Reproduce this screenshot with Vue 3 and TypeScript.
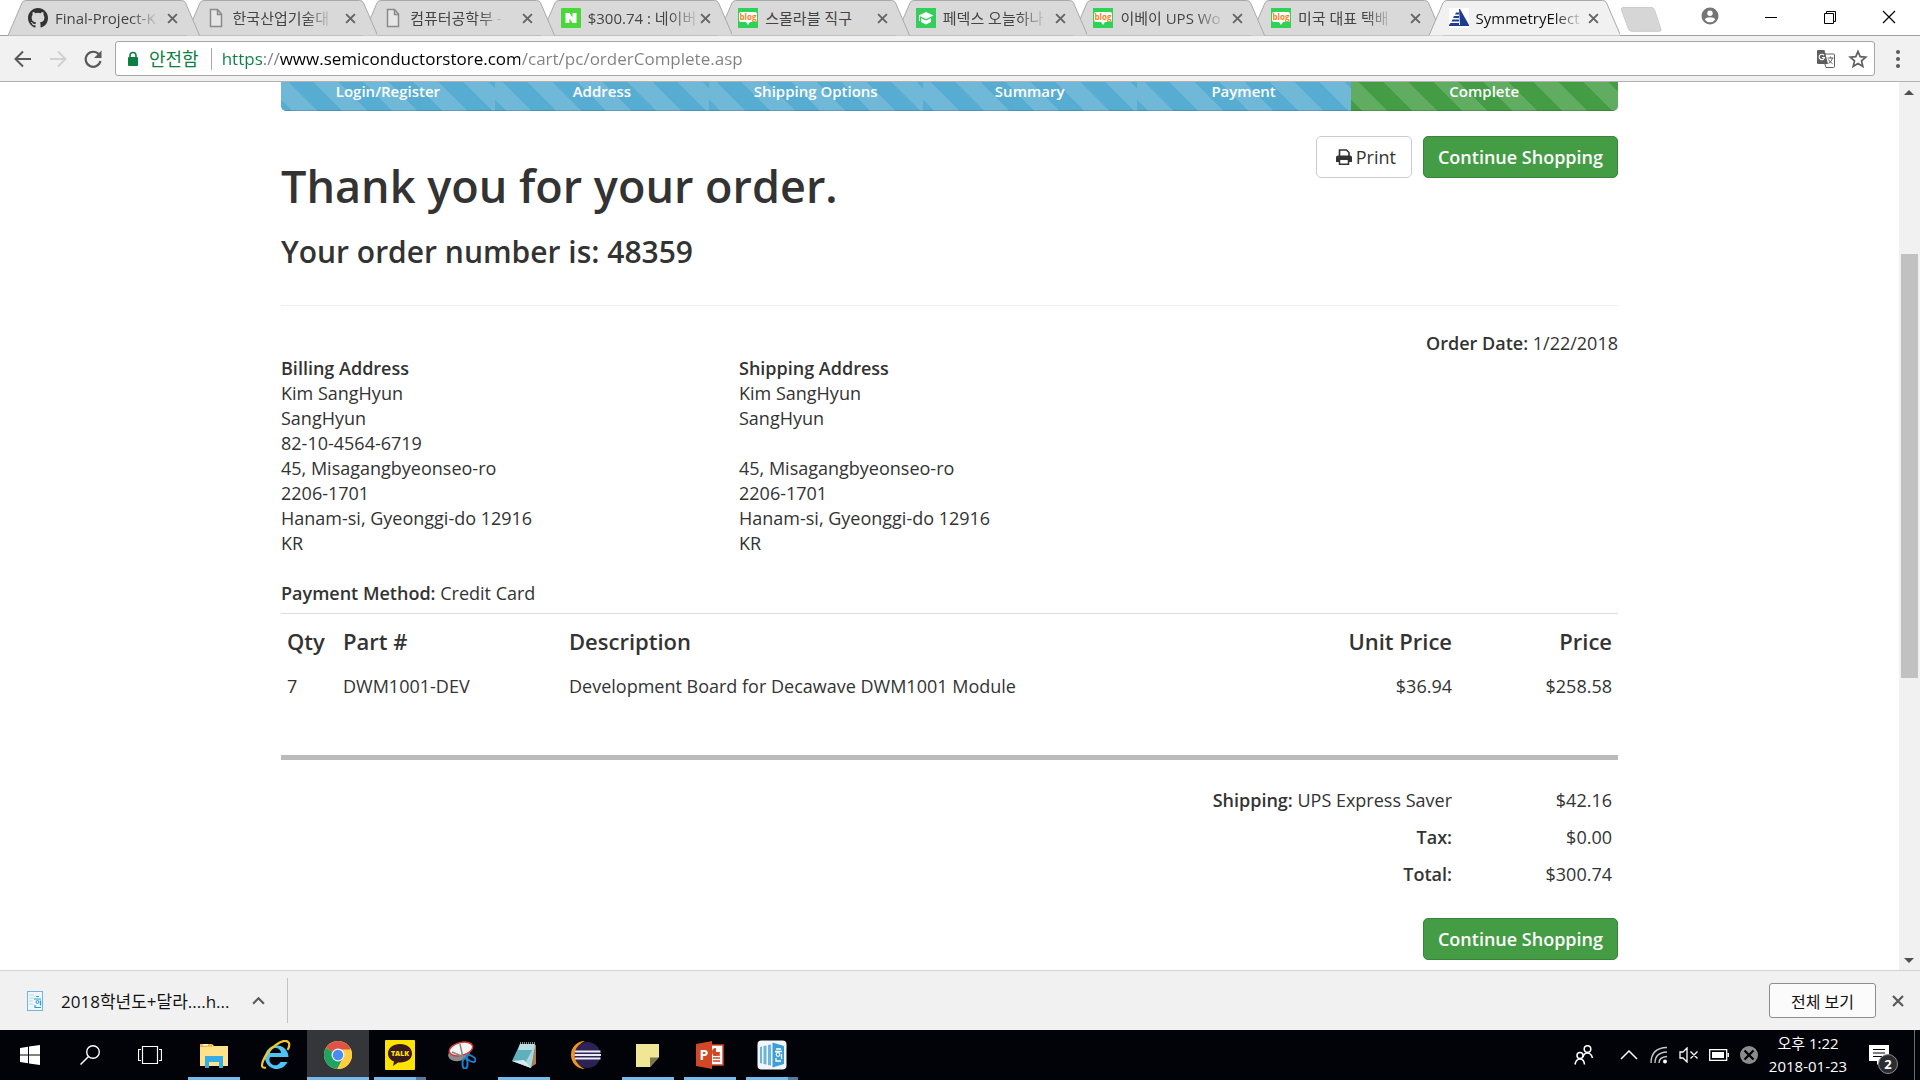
<script setup lang="ts">
interface Tab {
  title: string
  icon: 'github' | 'file' | 'naver' | 'blog' | 'cap' | 'sym'
  faded: boolean
}

const tabs: Tab[] = [
  { title: 'Final-Project-K', icon: 'github', faded: true },
  { title: '한국산업기술대', icon: 'file', faded: true },
  { title: '컴퓨터공학부 -', icon: 'file', faded: true },
  { title: '$300.74 : 네이버', icon: 'naver', faded: true },
  { title: '스몰라블 직구', icon: 'blog', faded: false },
  { title: '페덱스 오늘하나', icon: 'cap', faded: true },
  { title: '이베이 UPS Wo', icon: 'blog', faded: true },
  { title: '미국 대표 택배', icon: 'blog', faded: true },
  { title: 'SymmetryElect', icon: 'sym', faded: true },
]
const activeTab = tabs.length - 1

const steps = ['Login/Register', 'Address', 'Shipping Options', 'Summary', 'Payment', 'Complete']

const billing = ['Kim SangHyun', 'SangHyun', '82-10-4564-6719', '45, Misagangbyeonseo-ro', '2206-1701', 'Hanam-si, Gyeonggi-do 12916', 'KR']
const shipping = ['Kim SangHyun', 'SangHyun', '', '45, Misagangbyeonseo-ro', '2206-1701', 'Hanam-si, Gyeonggi-do 12916', 'KR']

const items = [
  { qty: 7, part: 'DWM1001-DEV', description: 'Development Board for Decawave DWM1001 Module', unit: '$36.94', price: '$258.58' },
]
const totals = [
  { label: 'Shipping:', note: 'UPS Express Saver', amount: '$42.16' },
  { label: 'Tax:', note: '', amount: '$0.00' },
  { label: 'Total:', note: '', amount: '$300.74' },
]
const url = 'https://www.semiconductorstore.com/cart/pc/orderComplete.asp'
</script>

<template>
  <div class="screen">
    <header class="tabstrip">
      <div class="tabs" role="tablist">
        <div
          v-for="(tab, i) in tabs"
          :key="i"
          class="tab"
          :class="{ active: i === activeTab }"
          :style="{ zIndex: i === activeTab ? 20 : 10 - i }"
          role="tab"
        >
          <svg class="shape" viewBox="0 0 192 36" preserveAspectRatio="none" aria-hidden="true">
            <path d="M0 35.5 L14 3 Q15 .5 18 .5 H174 Q177 .5 178 3 L192 35.5" />
          </svg>
          <svg v-if="tab.icon === 'github'" class="fav" viewBox="0 0 16 16">
            <path fill="#333" d="M8 0C3.58 0 0 3.58 0 8c0 3.54 2.29 6.53 5.47 7.59.4.07.55-.17.55-.38 0-.19-.01-.82-.01-1.49-2.01.37-2.53-.49-2.69-.94-.09-.23-.48-.94-.82-1.13-.28-.15-.68-.52-.01-.53.63-.01 1.08.58 1.23.82.72 1.21 1.87.87 2.33.66.07-.52.28-.87.51-1.07-1.78-.2-3.64-.89-3.64-3.95 0-.87.31-1.59.82-2.15-.08-.2-.36-1.02.08-2.12 0 0 .67-.21 2.2.82a7.6 7.6 0 0 1 4 0c1.53-1.04 2.2-.82 2.2-.82.44 1.1.16 1.92.08 2.12.51.56.82 1.27.82 2.15 0 3.07-1.87 3.75-3.65 3.95.29.25.54.73.54 1.48 0 1.07-.01 1.93-.01 2.2 0 .21.15.46.55.38A8 8 0 0 0 16 8c0-4.42-3.58-8-8-8z" />
          </svg>
          <svg v-else-if="tab.icon === 'file'" class="fav" viewBox="0 0 20 20">
            <path d="M4.500 1.500h7l4 4.500v12.500h-11zM11.500 1.500v5h4" fill="#e6e6e6" stroke="#8a8a8a" stroke-width="1.500" />
          </svg>
          <svg v-else-if="tab.icon === 'naver'" class="fav" viewBox="0 0 20 20">
            <rect width="20" height="20" rx="1" fill="#4bd63a" />
            <path d="M4.500 5h4l3 4.500V5h4v10h-4l-3-4.500V15h-4z" fill="#fff" />
          </svg>
          <svg v-else-if="tab.icon === 'blog'" class="fav" viewBox="0 0 20 20">
            <rect width="20" height="20" fill="#2fd257" />
            <path d="M3 4h14q2 0 2 2v6q0 2-2 2h-5l-2 3-2-3H3q-2 0-2-2V6q0-2 2-2z" fill="#fff" />
            <text x="10" y="12" text-anchor="middle" font-size="8" font-weight="700" fill="#f58220">blog</text>
          </svg>
          <svg v-else-if="tab.icon === 'cap'" class="fav" viewBox="0 0 20 20">
            <rect width="20" height="20" fill="#33cf5b" />
            <path d="M2.500 7.500 10 4l7.500 3.500L10 11zM5 10l5 2.500L15 10v4l-5 2.500L5 14zM3 8h1v5H3z" fill="#fff" />
          </svg>
          <svg v-else class="fav" viewBox="0 0 20 20">
            <rect width="20" height="20" fill="#fff" />
            <path d="M10 1h1l9 16h-9zM7 4.500h3v2H6zM5 8h5v2H4zM3.500 11.500H10v2H2.500zM1.500 15H10v2H0zM0 17h20v1H0z" fill="#1e3c90" />
          </svg>
          <span class="title" :class="{ faded: tab.faded }">{{ tab.title }}</span>
          <button class="tab-close" aria-label="Close tab">
            <svg viewBox="0 0 10 10"><path d="M1 1l8 8M9 1L1 9" stroke="#666" stroke-width="1.800" /></svg>
          </button>
        </div>
      </div>
      <button class="newtab" aria-label="New tab">
        <svg viewBox="0 0 44 26"><path d="M3 .5h30q2 0 3 2l7 21q.5 2-2 2H13q-3 0-4-2L1.500 3Q1 .5 3 .5z" fill="#d6d6d6" stroke="#cacaca" /></svg>
      </button>
      <div class="window-controls">
        <button class="profile" aria-label="Profile">
          <svg viewBox="0 0 18 18"><circle cx="9" cy="9" r="8.500" fill="#757575" /><circle cx="9" cy="6.200" r="2.700" fill="#fff" /><path d="M3.800 12.600Q5 10.300 9 10.300t5.200 2.300Q12.500 15.300 9 15.300t-5.200-2.700z" fill="#fff" /></svg>
        </button>
        <button aria-label="Minimize"><svg viewBox="0 0 14 14"><path d="M1 7.500h12" stroke="#000" /></svg></button>
        <button aria-label="Restore"><svg viewBox="0 0 14 14"><path d="M1.500 3.500h9v10h-9zM3.500 3.500v-2h9v10h-2" fill="none" stroke="#000" /></svg></button>
        <button aria-label="Close"><svg viewBox="0 0 14 14"><path d="M1 1l12 12M13 1L1 13" stroke="#000" stroke-width="1.200" /></svg></button>
      </div>
    </header>

    <nav class="toolbar">
      <button aria-label="Back"><svg viewBox="0 0 20 20"><path d="M18 10H3M10 2.500L2.500 10l7.500 7.500" fill="none" stroke="#5a5a5a" stroke-width="2" /></svg></button>
      <button aria-label="Forward"><svg viewBox="0 0 20 20"><path d="M2 10h15M10 2.500l7.500 7.500-7.500 7.500" fill="none" stroke="#d0d0d0" stroke-width="2" /></svg></button>
      <button aria-label="Reload"><svg viewBox="0 0 20 20"><path d="M16 5.500A7.500 7.500 0 1 0 17.500 12" fill="none" stroke="#5a5a5a" stroke-width="2.200" /><path d="M18.500 1.500v7.500H11z" fill="#5a5a5a" /></svg></button>
      <div class="omnibox">
        <svg class="lock" viewBox="0 0 12 16"><path d="M3 7V4.500a3 3 0 0 1 6 0V7" fill="none" stroke="#0b8043" stroke-width="1.600" /><rect x="1" y="6" width="10" height="9" rx="1" fill="#0b8043" /></svg>
        <label class="secure" for="address">안전함</label>
        <input id="address" class="address" type="text" :value="url" />
        <svg class="tool" viewBox="0 0 20 20">
          <path d="M9 5h8.500q1 0 1 1v11.500q0 1-1 1H10L8.500 14" fill="#fff" stroke="#5f5f5f" />
          <path d="M2 1h6.500l3.500 14H2q-1 0-1-1V2q0-1 1-1z" fill="#5f5f5f" />
          <path d="M8 6.300A2.700 2.700 0 1 0 8.500 8.500H6" fill="none" stroke="#fff" stroke-width="1.200" />
          <path d="M11.500 9h6M14.500 7.500V9M16.500 9q-1 4-4 5.500M12.500 10.500q1.500 3 4 4" fill="none" stroke="#5f5f5f" />
        </svg>
        <svg class="tool" viewBox="0 0 20 20"><path d="M10 2.500l2.200 5.200 5.600.5-4.300 3.700 1.300 5.500-4.800-2.900-4.800 2.900 1.300-5.500L2.200 8.200l5.600-.5z" fill="none" stroke="#5f5f5f" stroke-width="1.700" /></svg>
      </div>
      <button class="menu" aria-label="Menu"><svg viewBox="0 0 20 20"><circle cx="10" cy="3" r="2" /><circle cx="10" cy="10" r="2" /><circle cx="10" cy="17" r="2" /></svg></button>
    </nav>

    <div class="viewport">
      <main class="page">
        <ol class="steps">
          <li v-for="(step, i) in steps" :key="step" :class="{ done: i === steps.length - 1 }">{{ step }}</li>
        </ol>

        <div class="head">
          <div>
            <h1>Thank you for your order.</h1>
            <h2>Your order number is: 48359</h2>
          </div>
          <div class="actions">
            <button class="btn">
              <svg viewBox="0 0 18 18"><path d="M4.500 8V2h7L14 4.500V8" fill="none" stroke="#333" stroke-width="1.600" /><path d="M3 7.500h12q2 0 2 2V14h-3v-2H4v2H1V9.500q0-2 2-2z" fill="#333" /><path d="M4.500 12v4.200h9V12" fill="#fff" stroke="#333" stroke-width="1.500" /></svg>Print
            </button>
            <a class="btn primary" href="#">Continue Shopping</a>
          </div>
        </div>

        <p class="date"><b>Order Date:</b> 1/22/2018</p>

        <div class="addresses">
          <section>
            <b>Billing Address</b>
            <div v-for="(line, i) in billing" :key="i" class="line">{{ line }}</div>
          </section>
          <section>
            <b>Shipping Address</b>
            <div v-for="(line, i) in shipping" :key="i" class="line">{{ line }}</div>
          </section>
        </div>

        <p class="payment"><b>Payment Method:</b> Credit Card</p>

        <table class="items">
          <thead>
            <tr><th class="qty">Qty</th><th class="part">Part #</th><th>Description</th><th class="num">Unit Price</th><th class="num price">Price</th></tr>
          </thead>
          <tbody>
            <tr v-for="item in items" :key="item.part">
              <td>{{ item.qty }}</td><td>{{ item.part }}</td><td>{{ item.description }}</td><td class="num">{{ item.unit }}</td><td class="num">{{ item.price }}</td>
            </tr>
          </tbody>
        </table>

        <table class="totals">
          <tbody>
            <tr v-for="row in totals" :key="row.label">
              <th class="num">{{ row.label }}<span v-if="row.note">{{ ' ' + row.note }}</span></th><td class="num price">{{ row.amount }}</td>
            </tr>
          </tbody>
        </table>

        <div class="foot"><a class="btn primary" href="#">Continue Shopping</a></div>
      </main>
      <div class="scrollbar">
        <svg viewBox="0 0 20 20"><path d="M10 8l5 5H5z" fill="#505050" /></svg>
        <div class="track"><div class="thumb"></div></div>
        <svg viewBox="0 0 20 20"><path d="M10 13L5 8h10z" fill="#505050" /></svg>
      </div>
    </div>

    <div class="downloads">
      <button class="file">
        <svg viewBox="0 0 16 20"><rect x=".5" y=".5" width="15" height="19" fill="#eef7fc" stroke="#6fb6dc" /><path d="M2 4h5M2 7h5M2 10h4M2 13h4" stroke="#b9dcef" /><path d="M9 5.500h3M7 8h7M13.500 9.500v5M8 14v2.500h6" fill="none" stroke="#2b9ad6" stroke-width="1.200" /><circle cx="10.500" cy="11" r="1.500" fill="none" stroke="#2b9ad6" /></svg>
        <span>2018학년도+달라....h...</span>
      </button>
      <button class="more" aria-label="More"><svg viewBox="0 0 12 12"><path d="M1 9l5-5 5 5" fill="none" stroke="#5a5a5a" stroke-width="2" /></svg></button>
      <div class="divider"></div>
      <button class="show-all">전체 보기</button>
      <button class="dismiss" aria-label="Close"><svg viewBox="0 0 12 12"><path d="M1 1l10 10M11 1L1 11" stroke="#5a5a5a" stroke-width="2.200" /></svg></button>
    </div>

    <footer class="taskbar">
      <button class="sys" aria-label="Start"><svg width="20" height="20" viewBox="0 0 20 20"><path d="M0 3l8-1.200v7.700H0zM9 1.600L20 0v9.500H9zM0 10.500h8v7.700L0 17zM9 10.500h11V20L9 18.400z" fill="#fff" /></svg></button>
      <button class="sys" aria-label="Search"><svg width="20" height="20" viewBox="0 0 20 20"><circle cx="13" cy="7" r="6.300" fill="none" stroke="#fff" stroke-width="1.400" /><path d="M8.500 11.500L.5 19.500" stroke="#fff" stroke-width="1.500" /></svg></button>
      <button class="sys" aria-label="Task view"><svg width="24" height="20" viewBox="0 0 24 20"><path d="M4.500 1.500h15v17h-15zM3 4.500H.5v11H3M21 4.500h2.500v11H21" fill="none" stroke="#fff" stroke-width="1.200" /></svg></button>
      <div class="apps">
        <button class="app open" aria-label="File Explorer">
          <svg width="28" height="26" viewBox="0 0 28 26"><path d="M0 2h12l2 2h14v20H0z" fill="#ffe28a" /><path d="M0 2h12v3H0z" fill="#f2bb3c" /><path d="M3 2h5v1.500H3z" fill="#fff" /><path d="M5 26V14h18v12h-4v-6h-10v6z" fill="#33ade4" /></svg>
        </button>
        <button class="app" aria-label="Internet Explorer">
          <svg width="30" height="30" viewBox="0 0 30 30"><path d="M9 17h18.500a11.800 11.800 0 1 0-1 5h-7a5 5 0 0 1-10.500-5zm0-4a5.500 5 0 0 1 11 0z" fill="#4ec3f4" fill-rule="evenodd" /><path d="M5 27.500Q-1 29 2 21 6 11 15.500 4.500T28 3q1 3-1.500 7" fill="none" stroke="#f6c428" stroke-width="2.200" /></svg>
        </button>
        <button class="app open current" aria-label="Chrome">
          <svg width="28" height="28" viewBox="0 0 28 28"><circle cx="14" cy="14" r="14" fill="#ffcd42" /><path d="M14 14L1.900 7A14 14 0 0 1 26.100 7z" fill="#de5347" /><path d="M14 14L1.900 7A14 14 0 0 0 13 28l6.500-11z" fill="#1da362" /><path d="M14 14h6l-6.500 14A14 14 0 0 0 26.100 7H14z" fill="#ffcd42" /><path d="M14 7h12.100v1.500H14z" fill="#de5347" /><circle cx="14" cy="14" r="6.500" fill="#f1f1f1" /><circle cx="14" cy="14" r="5.200" fill="#4a8af4" /></svg>
        </button>
        <button class="app open stacked" aria-label="KakaoTalk">
          <svg width="30" height="30" viewBox="0 0 30 30"><rect width="30" height="30" rx="1" fill="#ffe300" /><path d="M15 4c-7 0-12 4-12 9.500 0 4 2.500 6.500 6 8L8 26l5-3.500h2c7 0 12-3.500 12-9S22 4 15 4z" fill="#391b1b" /><text x="15" y="16" text-anchor="middle" font-size="7" font-weight="800" fill="#ffe300">TALK</text></svg>
        </button>
        <button class="app" aria-label="Snipping Tool">
          <svg width="28" height="28" viewBox="0 0 28 28"><ellipse cx="11" cy="13" rx="11" ry="7" fill="#8c8c8c" transform="rotate(-12 11 13)" /><ellipse cx="13" cy="8" rx="12" ry="6.500" fill="#f4f4f4" stroke="#d33a3a" stroke-width="1.500" transform="rotate(-14 13 8)" /><path d="M12 3l3 14M4 11l12 5" stroke="#888" stroke-width="1.500" /><ellipse cx="17" cy="22.500" rx="2.500" ry="5" fill="none" stroke="#1c7fd0" stroke-width="2" /><ellipse cx="23" cy="17.500" rx="5" ry="2.600" fill="none" stroke="#1c7fd0" stroke-width="2" transform="rotate(30 23 17.500)" /></svg>
        </button>
        <button class="app open" aria-label="Notepad">
          <svg width="28" height="28" viewBox="0 0 28 28"><path d="M22 3l4 1v19l-5 3z" fill="#a9824b" /><path d="M10 3L25 4 21 27 2 20z" fill="#5fb0bd" /><path d="M10 3h15l-1 6H8z" fill="#b9dde2" /><path d="M25 4L21 27l-7-3z" fill="#a9d6dc" /><path d="M2 20l12-1 7 8z" fill="#d8ecee" /><path d="M10 2h15" stroke="#888" stroke-width="2" stroke-dasharray="1 1" /></svg>
        </button>
        <button class="app" aria-label="Eclipse">
          <svg width="30" height="28" viewBox="0 0 30 28"><path d="M14 0A14 14 0 0 0 14 28 15 15 0 0 1 14 0z" fill="#f7941e" /><circle cx="16.500" cy="14" r="13" fill="#2c2255" /><path d="M4 10.500h25.500M3.500 14H30M4 17.500h25.500" stroke="#eceaf5" stroke-width="2" /></svg>
        </button>
        <button class="app open" aria-label="Sticky Notes">
          <svg width="24" height="24" viewBox="0 0 24 24"><path d="M0 1h23v13l-9 10H0z" fill="#f0e696" /><path d="M14 14.500h9L14 24z" fill="#7c7850" /></svg>
        </button>
        <button class="app open" aria-label="PowerPoint">
          <svg width="28" height="28" viewBox="0 0 28 28"><path d="M13 4h14v20H13z" fill="#fff" stroke="#d24726" stroke-width="1.500" /><path d="M17 14h7M17 17h7M17 20h7" stroke="#d24726" stroke-width="1.500" /><path d="M20 7v4h4a4 4 0 1 1-4-4z" fill="#d24726" /><path d="M0 3l16-3v28L0 25z" fill="#d24726" /><text x="8" y="19" text-anchor="middle" font-size="14" font-weight="700" fill="#fff">P</text></svg>
        </button>
        <button class="app open stacked" aria-label="Hancom">
          <svg width="30" height="30" viewBox="0 0 30 30"><rect width="29" height="29" x=".5" y=".5" rx="4" fill="#f3f6f9" /><path d="M3 7l2-.5v17L3 23zM6.500 6l3-.5v19l-3-.5zM11 5l3-.5v21l-3-.5z" fill="#6bb5de" /><path d="M15.500 2.500L27 6v18l-11.500 3.500z" fill="#3d9fd6" /><path d="M19 9h5M18 11.500h7M24.500 14v5M19 18v3h5" fill="none" stroke="#fff" stroke-width="1.300" /><circle cx="21" cy="14.500" r="1.800" fill="none" stroke="#fff" stroke-width="1.200" /></svg>
        </button>
      </div>
      <div class="tray">
        <button class="people" aria-label="People"><svg width="20" height="20" viewBox="0 0 20 20"><g fill="none" stroke="#fff" stroke-width="1.500"><circle cx="13.500" cy="4" r="3.300" /><path d="M9 12q1-4 4.500-4t5 5" /><circle cx="6" cy="10.500" r="3" /><path d="M1 19.500q1-5.500 5-5.500t4.500 5.500" /></g></svg></button>
        <button aria-label="Hidden icons"><svg width="18" height="10" viewBox="0 0 18 10"><path d="M1 9l8-8 8 8" fill="none" stroke="#fff" stroke-width="1.500" /></svg></button>
        <button aria-label="Network"><svg width="18" height="18" viewBox="0 0 18 18"><g fill="none" stroke="#c9c9c9" stroke-width="1.400"><path d="M1 17Q1 2 17 1.500" /><path d="M5 17Q5 6.500 17 6" /><path d="M9 17q0-6 8-6.500" /></g><circle cx="15" cy="15.500" r="2" fill="#fff" /></svg></button>
        <button aria-label="Volume"><svg width="20" height="16" viewBox="0 0 20 16"><path d="M1 5h3l4-4v14l-4-4H1zM11.500 4.500l7 7M18.500 4.500l-7 7" fill="none" stroke="#fff" stroke-width="1.300" /></svg></button>
        <button aria-label="Battery"><svg width="20" height="12" viewBox="0 0 20 12"><path d="M.7.7h17v10.600H.7zM19.300 4v4" fill="none" stroke="#fff" stroke-width="1.300" /><path d="M3 3h12v6H3z" fill="#fff" /></svg></button>
        <button aria-label="Status"><svg width="18" height="18" viewBox="0 0 18 18"><circle cx="9" cy="9" r="9" fill="#8c8c8c" /><path d="M4.500 4.500l9 9M13.500 4.500l-9 9" stroke="#000" stroke-width="2.200" /></svg></button>
        <div class="clock"><span>오후 1:22</span><span>2018-01-23</span></div>
        <button class="notices" aria-label="Notifications">
          <svg width="20" height="20" viewBox="0 0 20 20"><path d="M0 0h20v16h-8l-4 4v-4H0z" fill="#fff" /><path d="M4 4.500h12M4 8h12M4 11.500h12" stroke="#000" stroke-width="1.200" /></svg>
          <span class="badge">2</span>
        </button>
        <div class="peek"></div>
      </div>
    </footer>
  </div>
</template>

<style>
body {
  margin: 0;
  overflow: hidden;
}
</style>

<style scoped>
.screen {
  display: flex;
  flex-direction: column;
  height: 100vh;
  background: #fff;
  color: #333;
  font-family: "Open Sans", "Noto Sans CJK KR", sans-serif;
}
.screen * {
  box-sizing: border-box;
}
button {
  display: flex;
  align-items: center;
  justify-content: center;
  padding: 0;
  border: 0;
  background: none;
  color: inherit;
  font: inherit;
}
svg {
  display: block;
  flex: none;
}

/* Tab strip */
.tabstrip {
  position: relative;
  z-index: 1;
  display: flex;
  height: 36px;
  padding-left: 8px;
  box-shadow: inset 0 -1px #a2a2a2;
}
.tabs {
  display: flex;
  flex: 0 1 1612px;
  min-width: 0;
}
.tab {
  position: relative;
  display: flex;
  flex: 1 1 0;
  align-items: center;
  min-width: 0;
  height: 36px;
  padding: 0 21px 0 20px;
  font-size: 15px;
  line-height: 24px;
  color: #444;
}
.tab + .tab {
  margin-left: -14px;
}
.tab .shape {
  position: absolute;
  inset: 0;
  width: 100%;
  height: 100%;
  fill: #d9d9d9;
  stroke: #a9a9a9;
}
.tab.active .shape {
  fill: #f1f1f1;
}
.tab.active {
  color: #111;
}
.fav {
  position: relative;
  width: 20px;
  height: 20px;
}
.title {
  position: relative;
  margin: 0 auto 0 7px;
  white-space: nowrap;
}
.faded {
  -webkit-mask-image: linear-gradient(90deg, #000 75%, rgba(0, 0, 0, .15));
  mask-image: linear-gradient(90deg, #000 75%, rgba(0, 0, 0, .15));
}
.tab-close {
  position: relative;
  width: 12px;
}
.tab-close svg {
  width: 11px;
}
.newtab {
  width: 42px;
  height: 39px;
}
.newtab svg {
  width: 42px;
}
.window-controls {
  display: flex;
  margin-left: auto;
  padding-right: 2px;
  height: 33px;
}
.window-controls button {
  width: 59px;
}
.window-controls svg {
  width: 14px;
}
.window-controls .profile {
  height: 31px;
  margin-right: 2px;
}
.window-controls .profile svg {
  width: 18px;
}

/* Toolbar */
.toolbar {
  display: flex;
  align-items: center;
  height: 46px;
  padding: 0 6px 0 5px;
  background: #f1f1f1;
  border-bottom: 1px solid #b0b0b0;
}
.toolbar button {
  width: 35px;
}
.toolbar button svg {
  width: 20px;
}
.toolbar button.menu {
  width: 32px;
  margin-left: 7px;
  fill: #5a5a5a;
}
.omnibox {
  display: flex;
  flex: 1;
  align-items: center;
  gap: 12px;
  height: 35px;
  margin-left: 5px;
  padding: 0 6px 0 11px;
  background: #fff;
  border: 1px solid #a6a6a6;
  border-radius: 3px;
}
.lock {
  width: 12px;
}
.secure {
  margin-left: -2px;
  padding-right: 12px;
  border-right: 1px solid #a8a8a8;
  color: #0b8043;
  font-size: 18px;
  line-height: 22px;
}
.address {
  flex: 1;
  min-width: 0;
  margin-left: -2px;
  padding: 0;
  border: 0;
  outline: 0;
  font: 17px/28px "Open Sans", sans-serif;
  color: transparent;
  background: linear-gradient(90deg, #0b8043 42px, #808080 42px 57px, #000 57px 298px, #808080 298px);
  -webkit-background-clip: text;
  background-clip: text;
}
.tool {
  width: 20px;
}

/* Viewport */
.viewport {
  display: flex;
  flex: 1;
  min-height: 0;
  overflow: hidden;
}
.page {
  width: 1337px;
  max-width: 90%;
  margin: 0 auto;
  font-size: 18px;
  line-height: 25px;
}
.scrollbar {
  display: flex;
  flex-direction: column;
  width: 21px;
  background: #f1f1f1;
}
.scrollbar svg {
  width: 20px;
}
.track {
  flex: 1;
}
.thumb {
  height: 50%;
  margin: 152px 2px 0;
  background: #c1c1c1;
}
.steps {
  display: flex;
  height: 62px;
  margin: -33px 0 25px;
  padding: 0;
  list-style: none;
  overflow: hidden;
  border-radius: 5px;
}
.steps li {
  width: 16%;
  padding-top: 30px;
  text-align: center;
  font-size: 15px;
  font-weight: 600;
  color: #fff;
  background: linear-gradient(45deg, rgba(255, 255, 255, .15) 25%, transparent 25%, transparent 50%, rgba(255, 255, 255, .15) 50%, rgba(255, 255, 255, .15) 75%, transparent 75%) 0 0 / 50px 50px #57acd1;
  box-shadow: inset 0 -1px rgba(0, 0, 0, .15);
}
.steps li.done {
  width: 20%;
  background-color: #449d44;
}
.head {
  display: flex;
  justify-content: space-between;
  padding-bottom: 37px;
  border-bottom: 1px solid #eee;
}
h1 {
  margin: 25px 0 24px;
  font-size: 45px;
  line-height: 50px;
  font-weight: 600;
}
h2 {
  margin: 0;
  font-size: 30px;
  line-height: 33px;
  font-weight: 600;
}
.actions {
  display: flex;
  align-items: flex-start;
  gap: 11px;
}
.btn {
  display: flex;
  align-items: center;
  height: 42px;
  padding: 0 15px;
  border: 1px solid #ccc;
  border-radius: 5px;
  font-size: 18px;
  line-height: 24px;
  text-decoration: none;
}
.btn svg {
  width: 18px;
  margin: 0 3px;
}
.btn.primary {
  padding: 0 14px;
  color: #fff;
  background: #449d44;
  border-color: #398439;
  font-weight: 600;
}
b,
th {
  font-weight: 600;
}
p {
  margin: 0;
}
.date {
  margin-top: 25px;
  text-align: right;
}
.addresses {
  display: flex;
}
.addresses section {
  width: 458px;
}
.line {
  min-height: 25px;
}
.payment {
  margin-top: 25px;
}
table {
  width: 100%;
  border-collapse: collapse;
  text-align: left;
}
th,
td {
  padding: 6px;
}
.items {
  margin: 7px 0 50px;
  border-top: 1px solid #ddd;
}
.items th {
  padding: 12px 6px;
  font-size: 22px;
  line-height: 30px;
}
.items .qty {
  width: 56px;
}
.items .part {
  width: 226px;
}
.num {
  text-align: right;
}
.price {
  width: 160px;
}
.totals {
  margin-bottom: 25px;
}
.totals span {
  font-weight: 400;
}
.totals::before {
  content: "";
  display: table-caption;
  height: 22px;
  border-top: 5px solid #bbb;
}
.foot {
  display: flex;
  justify-content: flex-end;
}

/* Downloads bar */
.downloads {
  display: flex;
  align-items: center;
  height: 60px;
  padding: 0 10px 0 27px;
  background: #f1f1f1;
  border-top: 1px solid #d2d2d2;
  color: #111;
}
.file {
  gap: 18px;
  width: 202px;
  justify-content: flex-start;
  font-size: 17px;
  white-space: nowrap;
}
.file svg {
  width: 16px;
}
.more {
  width: 58px;
}
.more svg {
  width: 13px;
}
.divider {
  width: 1px;
  height: 45px;
  margin-right: auto;
  background: #c3c3c3;
}
.show-all {
  width: 107px;
  height: 35px;
  border: 1px solid #8d8d8d;
  border-radius: 3px;
  background: #fbfbfb;
  font-size: 16px;
}
.dismiss {
  width: 24px;
  margin-left: 10px;
}
.dismiss svg {
  width: 12px;
}

/* Taskbar */
.taskbar {
  display: flex;
  height: 50px;
  background: #010308;
  color: #fff;
}
.sys {
  width: 60px;
}
.apps {
  display: flex;
  margin-left: 3px;
}
.app {
  position: relative;
  width: 62px;
}
.open::after {
  content: "";
  position: absolute;
  bottom: 0;
  left: 5px;
  right: 5px;
  height: 3px;
  background: #76b9ed;
}
.current {
  background: #35363a;
}
.current::after {
  left: 0;
  right: 0;
}
.stacked::after {
  background: linear-gradient(90deg, #76b9ed 80%, #54799c 80%);
}
.tray {
  display: flex;
  margin-left: auto;
}
.tray button {
  width: 30px;
}
.tray .people {
  margin-right: 15px;
}
.clock {
  display: flex;
  flex-direction: column;
  align-items: center;
  justify-content: center;
  width: 88px;
  font-size: 15px;
  line-height: 23px;
}
.tray .notices {
  position: relative;
  width: 54px;
}
.badge {
  position: absolute;
  left: 26px;
  top: 24px;
  width: 20px;
  height: 20px;
  border: 1px solid #8a8a8a;
  border-radius: 50%;
  background: #2c2d31;
  font-size: 13px;
  font-weight: 700;
  line-height: 18px;
}
.peek {
  width: 6px;
  margin-left: 8px;
  border-left: 1px solid #6a6a6a;
}
</style>
